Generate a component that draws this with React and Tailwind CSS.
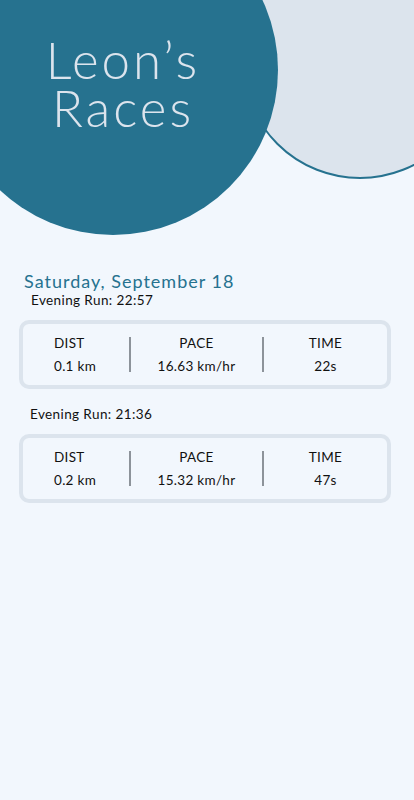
import React from "react";

const runs = [
  { title: "Evening Run: 22:57", dist: "0.1 km", pace: "16.63 km/hr", time: "22s" },
  { title: "Evening Run: 21:36", dist: "0.2 km", pace: "15.32 km/hr", time: "47s" },
];

function RunCard({ run }) {
  return (
    <div className="w-[372px] h-[69px] border-4 border-[#dce4ed] rounded-[10px] flex items-center text-[13.5px] tracking-[0.3px] text-[#111]">
      <div className="w-[106px] pl-[31px] flex flex-col gap-[8px] leading-[15px]">
        <span>DIST</span>
        <span>{run.dist}</span>
      </div>
      <div className="w-[2px] h-[35px] bg-[#8d939a]" />
      <div className="flex-1 flex flex-col items-center gap-[8px] leading-[15px]">
        <span>PACE</span>
        <span>{run.pace}</span>
      </div>
      <div className="w-[2px] h-[35px] bg-[#8d939a]" />
      <div className="w-[123px] flex flex-col items-center gap-[8px] leading-[15px]">
        <span>TIME</span>
        <span>{run.time}</span>
      </div>
    </div>
  );
}

export default function App() {
  return (
    <div
      className="w-[414px] h-[800px] bg-[#f2f7fd] overflow-hidden"
      style={{ fontFamily: "Lato, 'Noto Sans', sans-serif" }}
    >
      {/* header circles */}
      <div className="relative h-[270px]">
        <div className="absolute left-[242px] top-[-57px] w-[236px] h-[236px] rounded-full bg-[#dce4ed] border-2 border-[#26728f]" />
        <div className="absolute left-[-52px] top-[-95px] w-[330px] h-[330px] rounded-full bg-[#26728f]" />
        <div className="absolute left-0 top-[36px] w-[246px] text-center text-[#dce4ed] text-[51px] leading-[48px] font-light tracking-[3px]">
          <div>Leon’s</div>
          <div>Races</div>
        </div>
      </div>

      <div className="pl-[24px] text-[18px] leading-[22px] tracking-[1px] text-[#26728f]">Saturday, September 18</div>

      <div className="pl-[19px]">
        {runs.map((run, i) => (
          <div key={i} className={i === 0 ? "" : "mt-[17px]"}>
            <div className={`text-[13.5px] leading-[16px] tracking-[0.4px] text-[#111] mb-[12px] ${i === 0 ? "pl-[12px]" : "pl-[11px]"}`}>
              {run.title}
            </div>
            <RunCard run={run} />
          </div>
        ))}
      </div>
    </div>
  );
}
